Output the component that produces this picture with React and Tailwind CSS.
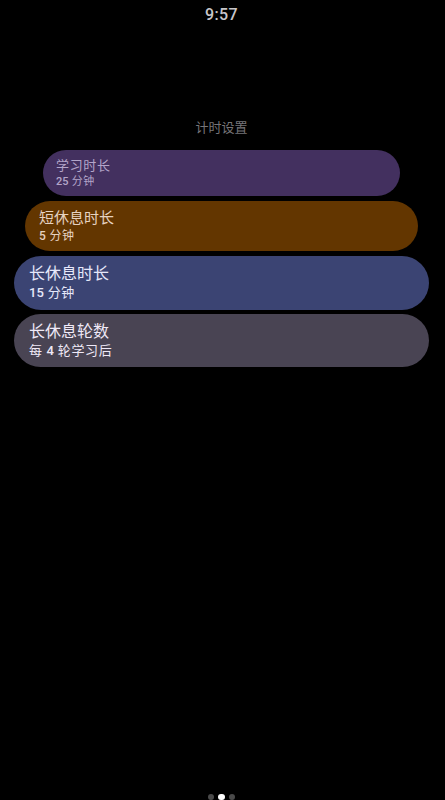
const rows = [
  {
    title: "学习时长",
    value: <><b className="font-medium tracking-normal">25</b> 分钟</>,
    box: "w-[357px] h-[46px] bg-[#43305f] px-[13px] pt-0.5 text-[#b3a5c9]",
    titleSize: "text-[13px] leading-[16px] tracking-wider",
    valueSize: "text-[11px] leading-[16px]",
    gap: "mb-[5px]",
  },
  {
    title: "短休息时长",
    value: <><b className="font-medium tracking-normal">5</b> 分钟</>,
    box: "w-[393px] h-[50px] bg-[#633600] px-[14px] pt-0.5 text-[#e6d2c0]",
    titleSize: "text-[15px] leading-[18px]",
    valueSize: "text-[12px] leading-[18px]",
    gap: "mb-[5px]",
  },
  {
    title: "长休息时长",
    value: <><b className="font-medium tracking-normal">15</b> 分钟</>,
    box: "w-[415px] h-[54px] bg-[#3b4473] px-[15px] text-[#e6e8fa]",
    titleSize: "text-[16px] leading-[20px]",
    valueSize: "text-[13px] leading-[18px]",
    gap: "mb-[4px]",
  },
  {
    title: "长休息轮数",
    value: <>每 <b className="font-medium tracking-normal">4</b> 轮学习后</>,
    box: "w-[415px] h-[53px] bg-[#494453] px-[15px] text-[#efe9f7]",
    titleSize: "text-[16px] leading-[20px]",
    valueSize: "text-[13px] leading-[18px]",
    gap: "",
  },
];

export default function App() {
  return (
    <main className="flex min-h-screen flex-col items-center bg-black pr-0.5 font-['Roboto','Noto_Sans_CJK_SC',sans-serif]">
      <time className="mt-[5px] text-[16px] leading-[20px] font-medium tracking-wide text-[#c8c6ca]">9:57</time>
      <h1 className="mt-[93px] mb-[12px] text-[13px] leading-[20px] text-[#777579]">计时设置</h1>
      {rows.map((r) => (
        <button key={r.title} className={`flex max-w-full flex-col justify-center rounded-full text-left ${r.box} ${r.gap}`}>
          <span className={r.titleSize}>{r.title}</span>
          <span className={`tracking-wider ${r.valueSize}`}>{r.value}</span>
        </button>
      ))}
      <nav className="mt-auto flex items-center gap-1" aria-label="页面">
        <span className="size-1.5 rounded-full bg-[#4a4a4a]" />
        <span className="h-1.5 w-[7px] rounded-full bg-white" />
        <span className="size-1.5 rounded-full bg-[#4a4a4a]" />
      </nav>
    </main>
  );
}
